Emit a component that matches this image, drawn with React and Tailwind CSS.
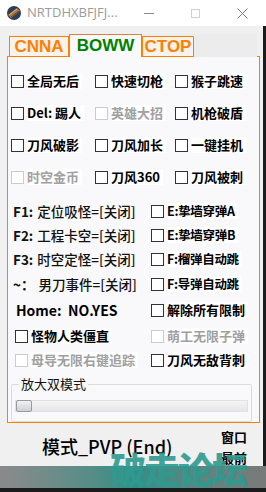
import React from "react"

const cjk = { fontFamily: '"Noto Sans CJK SC", "Noto Sans", sans-serif' }

function Check({ label, disabled, className = "", small }) {
  return (
    <div className={"flex items-center " + className}>
      <div
        className={
          "w-[13px] h-[13px] border bg-white shrink-0 " +
          (disabled ? "border-[#cccccc]" : "border-[#333333]")
        }
      />
      <span
        className={
          "ml-[3px] bg-white pr-[3px] font-bold leading-[16px] whitespace-nowrap " +
          (small ? "text-[12.5px] tracking-[-0.3px] " : "text-[13px] ") +
          (disabled ? "text-[#a0a0a0]" : "text-black")
        }
      >
        {label}
      </span>
    </div>
  )
}

function KeyLine({ k, text, className = "" }) {
  return (
    <div className={"flex items-center text-[13.5px] leading-[16px] whitespace-nowrap text-[#111] " + className}>
      <span className="font-bold">{k}</span>
      <span className="ml-[4px] font-medium">{text}</span>
    </div>
  )
}

export default function App() {
  const top = [
    ["全局无后", false],
    ["快速切枪", false],
    ["猴子跳速", false],
    ["Del: 踢人", false],
    ["英雄大招", true],
    ["机枪破盾", false],
    ["刀风破影", false],
    ["刀风加长", false],
    ["一键挂机", false],
    ["时空金币", true],
    ["刀风360", false],
    ["刀风被刺", false],
  ]

  return (
    <div className="relative w-[266px] h-[492px] overflow-hidden bg-[#1b1b1b]" style={cjk}>
      {/* title bar */}
      <div className="h-[26px] bg-white flex items-center">
        <svg width="14" height="14" viewBox="0 0 14 14" className="ml-[7px]">
          <circle cx="7" cy="7" r="7" fill="#2c3e5c" />
          <path d="M1 9 L10 2 L13 5 L4 12 Z" fill="#b0793a" />
          <path d="M2 9 L10 3" stroke="#e0b070" strokeWidth="1" />
          <path d="M4 11 L12 5" stroke="#6a4520" strokeWidth="1" />
        </svg>
        <span className="ml-[6px] text-[13px] text-[#9a9a9a]" style={{ fontFamily: '"Open Sans", sans-serif' }}>
          NRTDHXBFJFJ...
        </span>
        <div className="ml-[26px] w-[10px] h-px bg-[#888]" />
        <div className="ml-[37px] w-[9px] h-[9px] border border-[#d0d0d0]" />
        <svg width="11" height="11" viewBox="0 0 11 11" className="ml-[37px]">
          <path d="M0.5 0.5 L10.5 10.5 M10.5 0.5 L0.5 10.5" stroke="#777" strokeWidth="1" />
        </svg>
      </div>

      {/* body */}
      <div className="w-[263px] h-[440px] bg-[#f0f0f0] flex flex-col">
        {/* tabs */}
        <div
          className="mt-[8px] ml-[9px] w-[248px] h-[23px] bg-[#ececec] flex items-end relative z-10 -mb-px"
          style={{ fontFamily: '"Liberation Sans", Arial, sans-serif' }}
        >
          <div className="w-[60px] h-[21px] border border-[#ff8000] bg-[#f6f2ec] flex items-center justify-center text-[17px] font-bold text-[#ff8000]">
            CNNA
          </div>
          <div className="w-[73px] h-[23px] border border-b-0 border-[#ff8000] border-t-[#d9823a] bg-[#f9f9fb] flex items-center justify-center text-[17px] font-bold text-[#008000]">
            BOWW
          </div>
          <div className="w-[52px] h-[21px] border border-[#ff8000] bg-[#f6f2ec] flex items-center justify-center text-[17px] font-bold text-[#ff8000]">
            CTOP
          </div>
        </div>

        {/* panel */}
        <div className="ml-[7px] w-[253px] h-[371px] border border-[#ff8000] bg-[#f9f9fb] flex flex-col">
          <div className="mt-[8px] ml-[3px] grid grid-cols-[84px_80px_1fr]">
            {top.map(([l, d]) => (
              <Check key={l} label={l} disabled={d} className="h-[32px]" />
            ))}
          </div>

          <div className="mt-[6px] ml-[5px] grid grid-cols-[138px_1fr] grid-rows-[24px_24px_24px_26px_26px_26px_22px]">
            <KeyLine k="F1:" text="定位吸怪=[关闭]" />
            <Check label="E:挚墙穿弹A" small />
            <KeyLine k="F2:" text="工程卡空=[关闭]" />
            <Check label="E:挚墙穿弹B" small />
            <KeyLine k="F3:" text="时空定怪=[关闭]" />
            <Check label="F:榴弹自动跳" small />
            <KeyLine k="~：" text="男刀事件=[关闭]" />
            <Check label="F:导弹自动跳" small />
            <div className="flex items-center pl-[3px] text-[14px] font-bold leading-[16px]">Home:&nbsp;&nbsp;NO.YES</div>
            <Check label="解除所有限制" />
            <Check label="怪物人类僵直" className="pl-[2px]" />
            <Check label="萌工无限子弹" disabled />
            <Check label="母导无限右键追踪" disabled className="pl-[2px]" />
            <Check label="刀风无敌背刺" />
          </div>

          {/* group box */}
          <div className="relative mt-[13px] ml-[3px] w-[241px] h-[38px] border border-[#dcdcdc] rounded-[2px]">
            <span className="absolute left-[7px] -top-[9px] bg-[#f9f9fb] px-[2px] text-[13px] leading-[16px] text-[#111]">
              放大双模式
            </span>
            <div className="mt-[15px] ml-[3px] w-[233px] h-[12px] bg-gradient-to-b from-[#f4f4f4] to-[#e6e6e6] border border-[#e2e2e2] flex items-center">
              <div className="w-[16px] h-[12px] rounded-[2px] border border-[#9a9a9a] bg-gradient-to-b from-[#f2f2f4] to-[#cfd0d8]" />
            </div>
          </div>
        </div>

        {/* footer */}
        <div className="flex-1 flex">
          <div className="ml-[42px] mt-[12px] text-[18px] font-medium text-black leading-[22px]" style={{ fontFamily: '"Noto Sans CJK SC", "Open Sans", sans-serif' }}>
            模式_PVP (End)
          </div>
          <div className="ml-auto mr-[16px] mt-[3px] flex flex-col text-[13px] font-bold leading-[21px] text-black">
            <span>窗口</span>
            <span>最前</span>
          </div>
        </div>
      </div>

      {/* watermark banner */}
      <div className="w-[266px] h-[22px] bg-gradient-to-r from-[#8a8a8a] via-[#2f8e86] to-[#7a7a7a]" />

      <div className="absolute left-[110px] top-[450px] text-[36px] leading-none font-black text-[#2f9a90] opacity-90 tracking-[-2px]">
        破走论坛
      </div>
    </div>
  )
}
